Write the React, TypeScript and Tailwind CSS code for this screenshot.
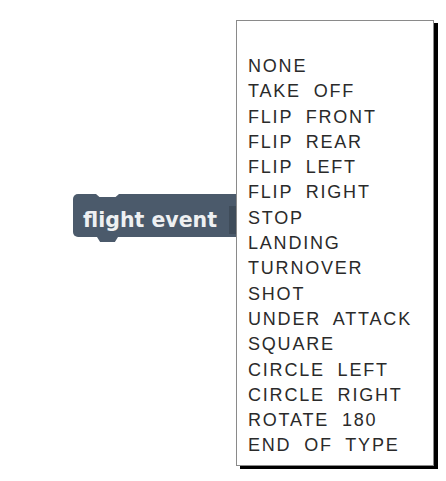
const items = [
  "NONE",
  "TAKE OFF",
  "FLIP FRONT",
  "FLIP REAR",
  "FLIP LEFT",
  "FLIP RIGHT",
  "STOP",
  "LANDING",
  "TURNOVER",
  "SHOT",
  "UNDER ATTACK",
  "SQUARE",
  "CIRCLE LEFT",
  "CIRCLE RIGHT",
  "ROTATE 180",
  "END OF TYPE",
];

const App = () => {
  return (
    <div className="relative w-[446px] h-[481px] bg-white pl-[73px] pt-[194px]">
      {/* block */}
      <div className="relative h-[43px] w-[180px] rounded-[5px] bg-[#4b5a6b] flex items-center pl-[10px] pt-[9px]">
        <div className="absolute top-0 left-[23px] w-[23px] h-[3px] bg-white [clip-path:polygon(0_0,100%_0,85%_100%,15%_100%)]" />
        <div className="absolute -bottom-[5px] left-[24px] w-[21px] h-[5px] bg-[#4b5a6b] [clip-path:polygon(0_0,100%_0,85%_100%,15%_100%)]" />
        <span className="font-['DejaVu_Sans',sans-serif] font-bold text-[20.5px] leading-none text-[#eef0f2]">
          flight event
        </span>
        <div className="absolute left-[156px] top-[12px] w-[14px] h-[28px] bg-[#3f4c5a]" />
      </div>

      {/* dropdown menu with a hard drop shadow drawn as its right and bottom edges */}
      <div className="absolute left-[236px] top-[20px] w-[202px] h-[449px] flex flex-col">
        <div className="flex flex-1">
          <div className="w-[198px] bg-white border border-[#8a8a8a] pt-[33px] pl-[11px]">
            <ul className="font-['Liberation_Sans',Arial,sans-serif] text-[18px] leading-[25.3px] tracking-[1.8px] [word-spacing:6px] text-[#2a2a2a]">
              {items.map((item) => (
                <li key={item} className="whitespace-nowrap">
                  {item}
                </li>
              ))}
            </ul>
          </div>
          <div className="w-[4px] mt-[3px] bg-[#000000]" />
        </div>
        <div className="h-[3px] ml-[4px] bg-[#000000]" />
      </div>
    </div>
  );
};

export default App;
